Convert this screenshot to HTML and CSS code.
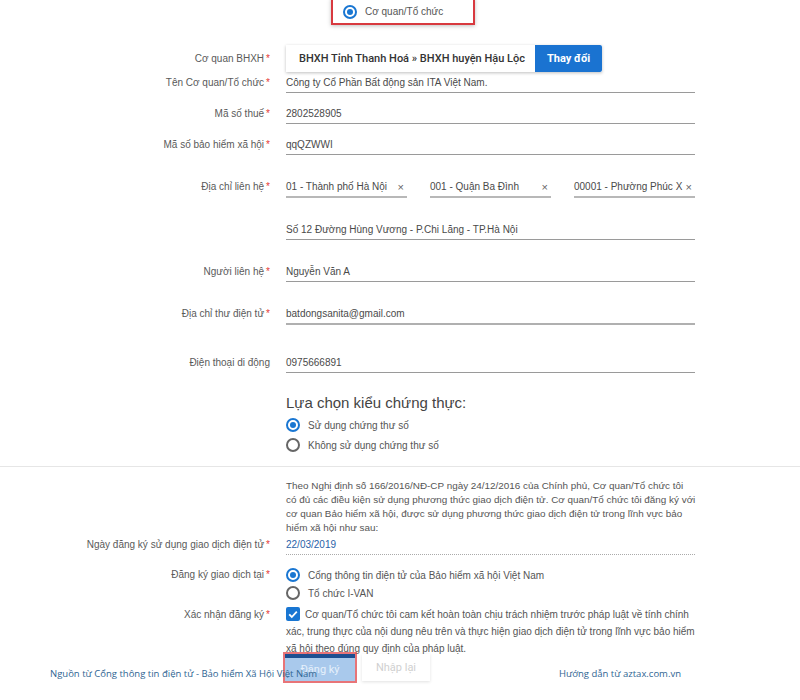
FILE: index.html
```html
<!DOCTYPE html>
<html lang="vi">
<head>
    <meta charset="UTF-8">
    <meta name="viewport" content="width=device-width, initial-scale=1.0">
    <title>Đăng ký giao dịch điện tử</title>
    <link rel="stylesheet" href="styles.css">
</head>
<body>
    <div class="type-choice">
        <span class="radio checked"></span>
        <span>Cơ quan/Tổ chức</span>
    </div>

    <form class="reg-form">
        <div class="row">
            <label class="row-label label-agency">Cơ quan BHXH<span class="req">*</span></label>
            <div class="agency">
                <div class="agency-name">BHXH Tỉnh Thanh Hoá » BHXH huyện Hậu Lộc</div>
                <button type="button" class="btn-change">Thay đổi</button>
            </div>
        </div>

        <div class="row gap-xs">
            <label class="row-label">Tên Cơ quan/Tổ chức<span class="req">*</span></label>
            <div class="field">Công ty Cổ Phần Bất động sản ITA Việt Nam.</div>
        </div>

        <div class="row gap-sm">
            <label class="row-label">Mã số thuế<span class="req">*</span></label>
            <div class="field">2802528905</div>
        </div>

        <div class="row gap-sm">
            <label class="row-label">Mã số bảo hiểm xã hội<span class="req">*</span></label>
            <div class="field">qqQZWWI</div>
        </div>

        <div class="row gap-md">
            <label class="row-label">Địa chỉ liên hệ<span class="req">*</span></label>
            <div class="address">
                <div class="select"><span>01 - Thành phố Hà Nội</span><span class="clear">×</span></div>
                <div class="select"><span>001 - Quận Ba Đình</span><span class="clear">×</span></div>
                <div class="select"><span>00001 - Phường Phúc X</span><span class="clear">×</span></div>
            </div>
        </div>

        <div class="row gap-md">
            <span></span>
            <div class="field">Số 12 Đường Hùng Vương - P.Chi Lăng - TP.Hà Nội</div>
        </div>

        <div class="row gap-md">
            <label class="row-label">Người liên hệ<span class="req">*</span></label>
            <div class="field">Nguyễn Văn A</div>
        </div>

        <div class="row gap-md">
            <label class="row-label">Địa chỉ thư điện tử<span class="req">*</span></label>
            <div class="field field-strong">batdongsanita@gmail.com</div>
        </div>

        <div class="row gap-lg">
            <label class="row-label">Điện thoại di động</label>
            <div class="field">0975666891</div>
        </div>

        <div class="auth">
            <h3 class="auth-title">Lựa chọn kiểu chứng thực:</h3>
            <div class="choice"><span class="radio checked"></span>Sử dụng chứng thư số</div>
            <div class="choice"><span class="radio"></span>Không sử dụng chứng thư số</div>
        </div>

        <hr class="divider">

        <p class="terms">Theo Nghị định số 166/2016/NĐ-CP ngày 24/12/2016 của Chính phủ, Cơ quan/Tổ chức tôi<br>
            có đủ các điều kiện sử dụng phương thức giao dịch điện tử. Cơ quan/Tổ chức tôi đăng ký với<br>
            cơ quan Bảo hiểm xã hội, được sử dụng phương thức giao dịch điện tử trong lĩnh vực bảo<br>
            hiểm xã hội như sau:</p>

        <div class="row gap-date">
            <label class="row-label">Ngày đăng ký sử dụng giao dịch điện tử<span class="req">*</span></label>
            <div class="field field-date">22/03/2019</div>
        </div>

        <div class="row gap-choice">
            <label class="row-label label-choice">Đăng ký giao dịch tại<span class="req">*</span></label>
            <div>
                <div class="choice"><span class="radio checked"></span>Cổng thông tin điện tử của Bảo hiểm xã hội Việt Nam</div>
                <div class="choice"><span class="radio"></span>Tổ chức I-VAN</div>
            </div>
        </div>

        <div class="row gap-confirm">
            <label class="row-label label-confirm">Xác nhận đăng ký<span class="req">*</span></label>
            <div class="confirm">
                <span class="checkbox">
                    <svg viewBox="0 0 14 14" width="14" height="14"><path d="M3.2 7.4l2.6 2.6 5-5.4" fill="none" stroke="#fff" stroke-width="1.8"/></svg>
                </span>Cơ quan/Tổ chức tôi cam kết hoàn toàn chịu trách nhiệm trước pháp luật về tính chính xác, trung thực của nội dung nêu trên và thực hiện giao dịch điện tử trong lĩnh vực bảo hiểm xã hội theo đúng quy định của pháp luật.
            </div>
        </div>

        <div class="actions">
            <button type="button" class="btn btn-submit">Đăng ký</button>
            <button type="button" class="btn btn-reset">Nhập lại</button>
        </div>
    </form>

    <div class="caption">
        <span>Nguồn từ Cổng thông tin điện tử - Bảo hiểm Xã Hội Việt Nam</span>
        <span>Hướng dẫn từ aztax.com.vn</span>
    </div>
</body>
</html>
```

FILE: styles.css
```css
body {
    margin: 0;
    height: 700px;
    overflow: hidden;
    position: relative;
    background-color: #fff;
    font-family: "Liberation Sans", Arial, sans-serif;
    font-size: 10px;
    color: #4a4a4a;
}
.type-choice {
    box-sizing: border-box;
    width: 144px;
    height: 27px;
    margin: -2px 0 0 331px;
    padding-left: 10px;
    display: flex;
    align-items: center;
    gap: 8px;
    border: 2px solid #d8393f;
    box-shadow: 0 1px 4px rgba(0, 0, 0, 0.25);
    color: #555;
}
.radio {
    box-sizing: border-box;
    flex: none;
    width: 14px;
    height: 14px;
    border: 2px solid #666;
    border-radius: 50%;
    position: relative;
}
.radio.checked {
    border-color: #1976d2;
}
.radio.checked::after {
    content: "";
    position: absolute;
    inset: 2px;
    border-radius: 50%;
    background-color: #1976d2;
}
.reg-form {
    margin-top: 20px;
}
.row {
    display: grid;
    grid-template-columns: 270px 409px;
    column-gap: 16px;
    align-items: start;
}
.gap-xs { margin-top: 5px; }
.gap-sm { margin-top: 15px; }
.gap-md { margin-top: 26px; }
.gap-lg { margin-top: 32px; }
.gap-date { margin-top: 4px; }
.gap-choice { margin-top: 11px; }
.gap-confirm { margin-top: 4px; }
.row-label {
    text-align: right;
    line-height: 12px;
    color: #5a5a5a;
}
.label-agency {
    line-height: 27px;
}
.label-choice {
    line-height: 18px;
}
.label-confirm {
    line-height: 17px;
}
.req {
    color: #e53935;
    margin-left: 2px;
}
.agency {
    display: flex;
    width: 316px;
    height: 27px;
    box-shadow: 0 1px 3px rgba(0, 0, 0, 0.25);
}
.agency-name {
    flex: 1;
    padding-left: 13px;
    line-height: 27px;
    font-family: Roboto, sans-serif;
    font-weight: 500;
    font-size: 11px;
    color: #333;
}
.btn-change {
    width: 67px;
    border: none;
    border-radius: 0 2px 2px 0;
    background-color: #1a73d1;
    color: #fff;
    font-family: Roboto, sans-serif;
    font-weight: 700;
    font-size: 11px;
}
.field {
    min-height: 12px;
    line-height: 12px;
    padding-bottom: 3px;
    border-bottom: 1px solid #9a9a9a;
}
.field-strong {
    border-bottom: 2px solid #b0b0b0;
}
.field-date {
    color: #2a62a8;
    border-bottom: 1px dotted #aaa;
}
.address {
    display: grid;
    grid-template-columns: repeat(3, 1fr);
    column-gap: 23px;
}
.select {
    display: flex;
    justify-content: space-between;
    line-height: 12px;
    padding: 0 3px 3px 0;
    border-bottom: 2px solid #b8b8b8;
}
.clear {
    color: #666;
    font-size: 11px;
}
.auth {
    margin: 21px 0 0 286px;
}
.auth-title {
    margin: 0 0 4px;
    font-size: 15px;
    font-weight: normal;
    line-height: 18px;
    color: #444;
}
.choice {
    display: flex;
    align-items: center;
    gap: 8px;
    height: 18px;
    color: #555;
}
.auth .choice + .choice {
    margin-top: 2px;
}
.divider {
    margin: 12px 0 0;
    border: 0;
    border-top: 1px solid #e6e6e6;
}
.terms {
    margin: 12px 0 0 286px;
    white-space: nowrap;
    font-size: 9.9px;
    line-height: 14px;
    color: #555;
}
.confirm {
    line-height: 17px;
    color: #555;
}
.checkbox {
    display: inline-block;
    width: 14px;
    height: 14px;
    margin-right: 5px;
    vertical-align: -3px;
    border-radius: 2px;
    background-color: #1976d2;
}
.checkbox svg {
    display: block;
}
.actions {
    margin: -3px 0 0 285px;
    display: flex;
    gap: 7px;
}
.btn {
    height: 27px;
    border: none;
    font-family: Roboto, sans-serif;
    font-size: 11px;
}
.btn-submit {
    width: 70px;
    border-top: 4px solid #1d4f91;
    background-color: #a9c9ec;
    color: #e6f0fb;
    box-shadow: 0 0 0 2px rgba(224, 69, 75, 0.75);
}
.btn-reset {
    width: 68px;
    background-color: #fff;
    color: #d0d0d0;
    box-shadow: 0 1px 3px rgba(0, 0, 0, 0.12);
}
.caption {
    position: absolute;
    left: 50px;
    top: 666px;
    width: 631px;
    display: flex;
    justify-content: space-between;
    font-family: "Open Sans", sans-serif;
    font-size: 9.5px;
    line-height: 16px;
    color: #2f6592;
}
```
